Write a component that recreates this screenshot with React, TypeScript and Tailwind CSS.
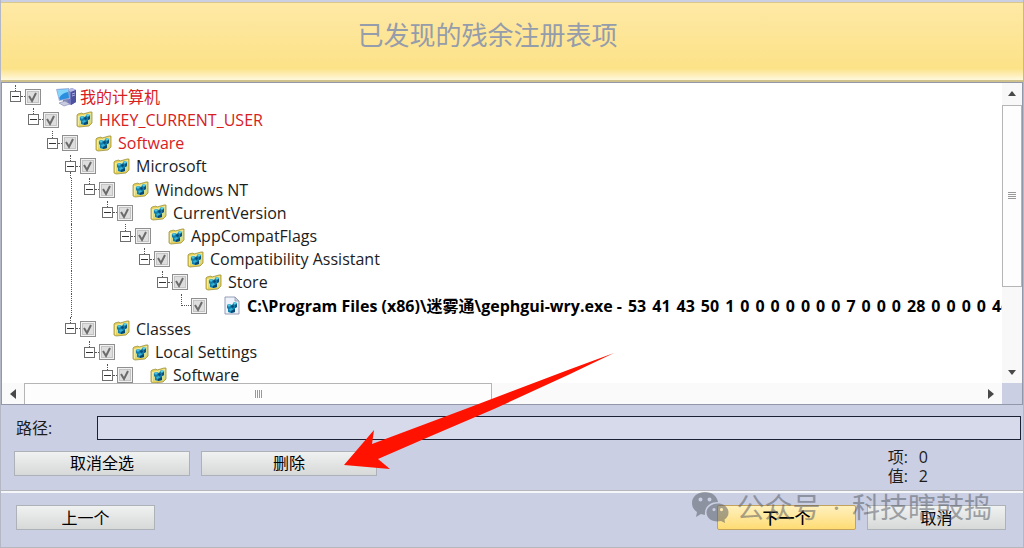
import React, { useState } from 'react';
import clsx from 'clsx';

type NodeKind = 'computer' | 'key' | 'value';

interface TreeNode {
  id: string;
  label: string;
  depth: number;
  kind: NodeKind;
  data?: string;
  highlight?: boolean;
  // the row is crossed by the line that joins two siblings at depth 3
  guide?: boolean;
}

const INDENT = 18.4;
const GUIDE_DEPTH = 3;

const nodes: TreeNode[] = [
  { id: 'root', label: '我的计算机', depth: 0, kind: 'computer', highlight: true },
  { id: 'hkcu', label: 'HKEY_CURRENT_USER', depth: 1, kind: 'key', highlight: true },
  { id: 'software', label: 'Software', depth: 2, kind: 'key', highlight: true },
  { id: 'microsoft', label: 'Microsoft', depth: 3, kind: 'key' },
  { id: 'winnt', label: 'Windows NT', depth: 4, kind: 'key', guide: true },
  { id: 'current', label: 'CurrentVersion', depth: 5, kind: 'key', guide: true },
  { id: 'appcompat', label: 'AppCompatFlags', depth: 6, kind: 'key', guide: true },
  { id: 'assistant', label: 'Compatibility Assistant', depth: 7, kind: 'key', guide: true },
  { id: 'store', label: 'Store', depth: 8, kind: 'key', guide: true },
  {
    id: 'gephgui',
    label: 'C:\\Program Files (x86)\\迷雾通\\gephgui-wry.exe -',
    data: '53 41 43 50 1 0 0 0 0 0 0 0 7 0 0 0 28 0 0 0 0 4c',
    depth: 9,
    kind: 'value',
    guide: true,
  },
  { id: 'classes', label: 'Classes', depth: 3, kind: 'key' },
  { id: 'local', label: 'Local Settings', depth: 4, kind: 'key' },
  { id: 'software2', label: 'Software', depth: 5, kind: 'key' },
];

const indentOf = (depth: number) => Math.round(depth * INDENT);

function ComputerIcon() {
  return (
    <svg viewBox="0 0 20 20" className="h-5 w-5 shrink-0" aria-hidden="true">
      <path d="M11 3 L16 1 L20 3 V15 L15 18 L11 16 Z" fill="#7276bd" />
      <path d="M11 3 L16 1 L20 3 L15 5 Z" fill="#b9bce6" />
      <path d="M15 5 L20 3 V15 L15 18 Z" fill="#4d529f" />
      <path d="M16 7 L19 6 M16 9 L19 8" stroke="#c5c9f2" strokeWidth="0.8" />
      <path d="M0 2 L13 1 L14 12 L3 14 Z" fill="#a3b2d8" />
      <path d="M1 3 L12 2 L13 11 L4 13 Z" fill="#2b8fdf" />
      <path d="M1 3 L12 2 L12 5 Q6 6 3 11 Z" fill="#86d6fb" />
      <path d="M7 13 L11 12 L12 15 L7 16 Z" fill="#8389b4" />
      <path d="M3 16 L9 14 L14 17 L8 19 Z" fill="#c9cce0" stroke="#8085ad" strokeWidth="0.6" />
    </svg>
  );
}

function Cubes() {
  return (
    <>
      <path d="M4 6 L6 5 L9 6 L11 3 L14 4 V8 L12 9 V13 L8 14 L5 13 V10 L4 9 Z" fill="#127eab" />
      <path d="M4 6 L6 5 L8 6 L6 8 Z" fill="#4ec4de" />
      <path d="M10 4 L12 3 L14 4 L12 6 Z" fill="#5fd0e6" />
      <path d="M6 10 L9 9 L10 11 L7 12 Z" fill="#37b0d2" />
      <path d="M8 12 L12 10 V13 L8 14 Z" fill="#0a4672" />
      <path d="M12 6 L14 5 V8 L12 9 Z" fill="#0c5080" />
      <path d="M8 7 L10 6 L11 8 L9 9 Z" fill="#0a4672" />
    </>
  );
}

function FolderIcon() {
  return (
    <svg viewBox="0 0 17 17" className="h-[17px] w-[17px] shrink-0" aria-hidden="true">
      <path
        d="M1 4 L2 3 L6 2 L7 3 L14 1 L16 1 V12 L13 15 L3 16 L1 15 Z"
        fill="#e6cf55"
        stroke="#9c9343"
        strokeWidth="0.8"
      />
      <path d="M2 5 L7 4 L15 2 V5 L4 7 L3 14 L2 15 Z" fill="#f6eca0" />
      <path d="M3 6 L15 3 V11 L12 14 L4 14 Z" fill="#d3dc8e" />
      <Cubes />
    </svg>
  );
}

function ValueIcon() {
  return (
    <svg viewBox="0 0 17 19" className="h-[19px] w-[17px] shrink-0" aria-hidden="true">
      <path d="M1 1 H11 L15 5 V18 H1 Z" fill="#eef2fa" stroke="#8a94ae" strokeWidth="0.9" />
      <path d="M11 1 V5 H15 Z" fill="#c8d1e4" stroke="#8a94ae" strokeWidth="0.7" />
      <g transform="translate(-1 3)">
        <Cubes />
      </g>
    </svg>
  );
}

function CheckBox({ id, checked, onChange }: { id: string; checked: boolean; onChange: () => void }) {
  return (
    <span className="relative h-4 w-4 shrink-0">
      <input
        id={id}
        type="checkbox"
        checked={checked}
        onChange={onChange}
        className="block h-4 w-4 appearance-none border border-[#8f8f8f] bg-[#dedede] shadow-[inset_0_0_0_1px_#f2f2f2,inset_0_0_0_2px_#c4c4c4]"
      />
      {checked && (
        <svg viewBox="0 0 16 16" className="pointer-events-none absolute inset-0 h-4 w-4" aria-hidden="true">
          <path d="M4 7 L7 12 L11 4" fill="none" stroke="#6b6b6b" strokeWidth="2" />
        </svg>
      )}
    </span>
  );
}

function TreeRow({ node, checked, onToggle }: { node: TreeNode; checked: boolean; onToggle: () => void }) {
  const indent = indentOf(node.depth) + (node.kind === 'value' ? 5 : 0);
  const guideWidth = indentOf(GUIDE_DEPTH) + 14;

  return (
    <li className="flex min-h-0 flex-1 items-center pl-[1px]">
      {node.guide ? (
        <>
          <span
            className="shrink-0 self-stretch border-r border-dotted border-[#555]"
            style={{ width: guideWidth }}
          />
          <span className="shrink-0" style={{ width: indent + 7 - guideWidth }} />
        </>
      ) : (
        <span className="shrink-0" style={{ width: indent + 7 }} />
      )}

      {/* Expander and its connector lines */}
      {node.kind === 'value' ? (
        <span className="flex w-[10px] shrink-0 flex-col self-stretch">
          <span className="h-3 border-b border-l border-dotted border-[#555]" />
        </span>
      ) : (
        <>
          <span className="flex w-[11px] shrink-0 flex-col items-center self-stretch">
            <span className="w-px flex-1 border-l border-dotted border-[#555]" />
            <button
              type="button"
              aria-label={`折叠 ${node.label}`}
              className="flex h-[11px] w-[11px] items-center justify-center border border-[#6e6e6e] bg-white"
            >
              <span className="h-px w-[7px] bg-[#333]" />
            </button>
            <span
              className={clsx(
                'w-px flex-1',
                node.id === 'microsoft' && 'border-l border-dotted border-[#555]'
              )}
            />
          </span>
          <span className="w-1 shrink-0 border-t border-dotted border-[#555]" />
        </>
      )}

      <CheckBox id={node.id} checked={checked} onChange={onToggle} />

      <label
        htmlFor={node.id}
        className={clsx(
          'flex items-center whitespace-nowrap text-base leading-[22px]',
          node.kind === 'computer' ? 'gap-1 pl-[15px]' : 'gap-[6px] pl-[17px]',
          node.highlight && 'text-[#d8201f]',
          node.kind === 'value' && 'font-bold text-black'
        )}
      >
        {node.kind === 'computer' && <ComputerIcon />}
        {node.kind === 'key' && <FolderIcon />}
        {node.kind === 'value' && <ValueIcon />}
        <span>{node.label}</span>
        {/* Raw bytes of the value */}
        {node.data?.split(' ').map((byte, index) => (
          <span key={index}>{byte}</span>
        ))}
      </label>
    </li>
  );
}

const arrowPaths = {
  up: 'M5 2 L9 7 H1 Z',
  down: 'M1 3 H9 L5 8 Z',
  left: 'M8 0 V10 L2 5 Z',
  right: 'M2 0 V10 L8 5 Z',
};

function ScrollArrow({ dir, label }: { dir: keyof typeof arrowPaths; label: string }) {
  return (
    <button type="button" aria-label={label} className="flex h-[22px] w-[22px] shrink-0 items-center justify-center">
      <svg viewBox="0 0 10 10" className="h-[10px] w-[10px]" aria-hidden="true">
        <path d={arrowPaths[dir]} fill="#484848" />
      </svg>
    </button>
  );
}

function DialogButton({ className, children, onClick }: {
  className: string;
  children: React.ReactNode;
  onClick?: () => void;
}) {
  return (
    <button
      type="button"
      onClick={onClick}
      className={clsx('h-[25px] shrink-0 border text-base leading-5 text-black', className)}
    >
      {children}
    </button>
  );
}

const plainButton = 'border-[#adb1b8] bg-linear-to-b from-[#f0f2f1] to-[#d6d9d8]';

function Watermark() {
  return (
    <div className="pointer-events-none absolute right-[31px] bottom-[25px] flex items-center gap-2 text-[#52565f] opacity-50">
      <svg viewBox="0 0 38 32" className="h-8 w-[38px]" aria-hidden="true">
        <path
          fillRule="evenodd"
          fill="currentColor"
          d="M14 1 C6 1 1 6 1 12 C1 16 3 19 6 21 L5 26 L10 23 L14 24 C13 17 18 11 27 11 C26 5 21 1 14 1 Z M9.500 6.500 a2 2 0 1 1 0 4 a2 2 0 1 1 0 -4 Z M18.500 6.500 a2 2 0 1 1 0 4 a2 2 0 1 1 0 -4 Z"
        />
        <path
          fillRule="evenodd"
          fill="currentColor"
          d="M27 12.500 C20 12.500 15.500 17 15.500 21.500 C15.500 26.500 20 30.500 26.500 30.500 L30 30 L34 32 L33.500 28.500 C36 27 37.500 24.500 37.500 21.500 C37.500 16.500 33 12.500 27 12.500 Z M23 17 a1.600 1.600 0 1 1 0 3.200 a1.600 1.600 0 1 1 0 -3.200 Z M30.500 17 a1.600 1.600 0 1 1 0 3.200 a1.600 1.600 0 1 1 0 -3.200 Z"
        />
      </svg>
      <p className="flex gap-3 text-[28px] leading-8 whitespace-nowrap">
        <span>公众号</span>
        <span>·</span>
        <span>科技瞎鼓捣</span>
      </p>
    </div>
  );
}

export default function App() {
  const [selected, setSelected] = useState<string[]>(nodes.map((node) => node.id));

  const toggle = (id: string) => {
    setSelected((prev) => (prev.includes(id) ? prev.filter((item) => item !== id) : [...prev, id]));
  };

  return (
    <div className="relative flex h-screen flex-col overflow-hidden border-x border-[#b4b8c4] bg-[#cacfe3] font-['Open_Sans','Noto_Sans_CJK_SC',sans-serif] text-[#1c1c1c]">
      {/* Title banner */}
      <header className="mt-[2px] flex h-20 shrink-0 justify-center border-t border-b-2 border-t-[#d9c88e] border-b-[#cfc28c] bg-linear-to-b from-[#fee9a6] from-0% via-[#fce287] via-85% to-[#fff8dc] to-100% pt-3 pr-[49px]">
        <h1 className="text-[26px] leading-10 font-normal text-[#959cab]">已发现的残余注册表项</h1>
      </header>

      {/* Registry tree */}
      <main className="flex min-h-0 flex-1 flex-col border border-[#9298a8] bg-white">
        <div className="flex min-h-0 flex-1">
          <ul className="flex h-[304px] min-w-0 flex-1 flex-col overflow-hidden pt-[2px]">
            {nodes.map((node) => (
              <TreeRow
                key={node.id}
                node={node}
                checked={selected.includes(node.id)}
                onToggle={() => toggle(node.id)}
              />
            ))}
          </ul>
          <div className="flex w-5 shrink-0 flex-col items-center bg-[#f8f8f8]">
            <ScrollArrow dir="up" label="向上滚动" />
            <div className="flex min-h-0 flex-1 flex-col self-stretch">
              <div className="flex h-[71%] flex-col items-center justify-center gap-px border border-[#b5b5b5] bg-[#fdfdfd]">
                <span className="h-px w-2 bg-[#999]" />
                <span className="h-px w-2 bg-[#999]" />
                <span className="h-px w-2 bg-[#999]" />
                <span className="h-px w-2 bg-[#999]" />
              </div>
            </div>
            <ScrollArrow dir="down" label="向下滚动" />
          </div>
        </div>
        <div className="flex h-[21px] shrink-0">
          <div className="flex min-w-0 flex-1 items-center bg-[#fafafa]">
            <ScrollArrow dir="left" label="向左滚动" />
            <div className="flex min-w-0 flex-1 self-stretch">
              <div className="flex w-[49%] items-center justify-center gap-px border border-b-0 border-[#b5b5b5] bg-[#fdfdfd]">
                <span className="h-2 w-px bg-[#999]" />
                <span className="h-2 w-px bg-[#999]" />
                <span className="h-2 w-px bg-[#999]" />
                <span className="h-2 w-px bg-[#999]" />
              </div>
            </div>
            <ScrollArrow dir="right" label="向右滚动" />
          </div>
          <span className="w-5 shrink-0 bg-[#cacfe3]" />
        </div>
      </main>

      {/* Path and selection actions */}
      <section className="shrink-0 border-b border-[#b4b8bd] pt-[11px] pr-[2px] pb-1">
        <div className="flex items-center pl-[15px]">
          <label htmlFor="path" className="w-[81px] text-base leading-5">
            路径:
          </label>
          <input
            id="path"
            type="text"
            readOnly
            className="h-6 min-w-0 flex-1 border border-[#1c2233] bg-[#d6daea] px-2 text-sm outline-none"
          />
        </div>
        <div className="flex items-center gap-[11px] pt-[8px] pr-[93px] pl-[13px]">
          <DialogButton className={clsx('mb-2 w-44', plainButton)} onClick={() => setSelected([])}>
            取消全选
          </DialogButton>
          <DialogButton className={clsx('mb-2 w-44', plainButton)}>删除</DialogButton>
          <dl className="ml-auto grid grid-cols-[31px_auto] text-base leading-[19px]">
            <dt>项:</dt>
            <dd>0</dd>
            <dt>值:</dt>
            <dd>2</dd>
          </dl>
        </div>
      </section>

      {/* Wizard navigation */}
      <footer className="flex shrink-0 items-start gap-[11px] border-t-2 border-b border-t-[#f4f6fa] border-b-[#b4b8bd] pt-3 pr-[17px] pb-[17px] pl-[15px]">
        <DialogButton className={clsx('mr-auto w-[139px]', plainButton)}>上一个</DialogButton>
        <DialogButton className="w-[139px] rounded-[2px] border-[#c3a35c] bg-linear-to-b from-[#fff0bd] to-[#fedc72] font-medium">
          下一个
        </DialogButton>
        <DialogButton className={clsx('w-[139px]', plainButton)}>取消</DialogButton>
      </footer>

      <Watermark />

      {/* Pointer to the delete button */}
      <svg
        viewBox="0 0 272 118"
        className="pointer-events-none absolute top-[352px] left-[342px] h-[118px] w-[272px]"
        aria-hidden="true"
      >
        <path
          d="M1 113 L31 78 L29 92 L125 56 L225 18 L271 1 L225 23 L151 57 L81 87 L35 107 L47 117 Z"
          fill="#ff1200"
        />
      </svg>
    </div>
  );
}
